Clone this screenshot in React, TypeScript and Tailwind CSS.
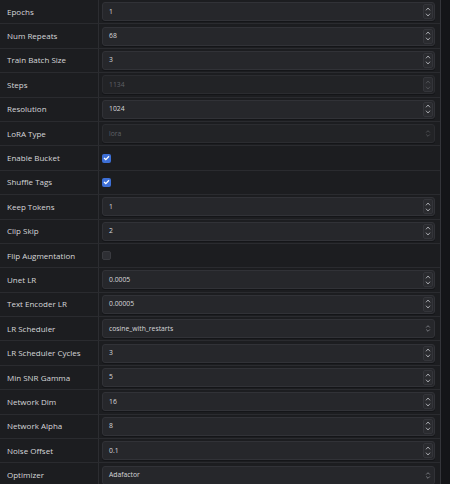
// 训练参数表格
type Field =
  | { label: string; kind: 'number'; value: string; disabled?: boolean }
  | { label: string; kind: 'select'; value: string; disabled?: boolean }
  | { label: string; kind: 'check'; checked: boolean };

const fields: Field[] = [
  { label: 'Epochs', kind: 'number', value: '1' },
  { label: 'Num Repeats', kind: 'number', value: '68' },
  { label: 'Train Batch Size', kind: 'number', value: '3' },
  { label: 'Steps', kind: 'number', value: '1134', disabled: true },
  { label: 'Resolution', kind: 'number', value: '1024' },
  { label: 'LoRA Type', kind: 'select', value: 'lora', disabled: true },
  { label: 'Enable Bucket', kind: 'check', checked: true },
  { label: 'Shuffle Tags', kind: 'check', checked: true },
  { label: 'Keep Tokens', kind: 'number', value: '1' },
  { label: 'Clip Skip', kind: 'number', value: '2' },
  { label: 'Flip Augmentation', kind: 'check', checked: false },
  { label: 'Unet LR', kind: 'number', value: '0.0005' },
  { label: 'Text Encoder LR', kind: 'number', value: '0.00005' },
  { label: 'LR Scheduler', kind: 'select', value: 'cosine_with_restarts' },
  { label: 'LR Scheduler Cycles', kind: 'number', value: '3' },
  { label: 'Min SNR Gamma', kind: 'number', value: '5' },
  { label: 'Network Dim', kind: 'number', value: '16' },
  { label: 'Network Alpha', kind: 'number', value: '8' },
  { label: 'Noise Offset', kind: 'number', value: '0.1' },
  { label: 'Optimizer', kind: 'select', value: 'Adafactor' },
];

function Chevron({ up, dim }: { up?: boolean; dim?: boolean }) {
  return (
    <svg width="6" height="4" viewBox="0 0 6 4" className={dim ? 'opacity-30' : ''}>
      <path
        d={up ? 'M1 3.3 L3 1 L5 3.3' : 'M1 0.7 L3 3 L5 0.7'}
        fill="none"
        stroke="#a4a6ab"
        strokeWidth="1"
      />
    </svg>
  );
}

function Spinner({ disabled }: { disabled?: boolean }) {
  return (
    <div className="w-[10px] h-[15px] mr-[1px] flex flex-col items-center justify-center gap-[2px] border border-[#34353a] bg-[#2a2b2f] rounded-[2px]">
      <Chevron up dim={disabled} />
      <Chevron dim={disabled} />
    </div>
  );
}

function SelectArrows({ disabled }: { disabled?: boolean }) {
  return (
    <svg width="6" height="9" viewBox="0 0 6 9" className={disabled ? 'opacity-40' : 'opacity-80'}>
      <path d="M1.2 3.5 L3 1.7 L4.8 3.5 M1.2 5.5 L3 7.3 L4.8 5.5" fill="none" stroke="#8d8f95" strokeWidth="1" />
    </svg>
  );
}

function FieldInput({ field }: { field: Field }) {
  if (field.kind === 'check') {
    return field.checked ? (
      <div className="w-[9px] h-[9px] rounded-[2px] bg-[#3d6fd6] flex items-center justify-center">
        <svg width="7" height="6" viewBox="0 0 7 6">
          <path d="M1 3 L2.8 4.6 L6 1.3" fill="none" stroke="#ffffff" strokeWidth="1.3" />
        </svg>
      </div>
    ) : (
      <div className="w-[9px] h-[9px] rounded-[2px] bg-[#2e2f34] border border-[#3a3b40]" />
    );
  }

  const disabled = field.disabled;
  return (
    <div
      className={`w-full h-[19px] flex items-center rounded-[3px] border shadow-[0_1px_0_#141518] ${
        disabled ? 'bg-[#222326] border-[#2b2c30]' : 'bg-[#26272b] border-[#313237]'
      }`}
    >
      <span className={`flex-1 pl-[6px] text-[6.8px] font-medium ${disabled ? 'text-[#5f6166]' : 'text-[#d8d9dc]'}`}>
        {field.value}
      </span>
      {field.kind === 'number' ? (
        <Spinner disabled={disabled} />
      ) : (
        <div className="w-[12px] flex items-center justify-center">
          <SelectArrows disabled={disabled} />
        </div>
      )}
    </div>
  );
}

export default function App() {
  return (
    <div
      className="w-[450px] h-[484px] flex overflow-hidden bg-[#1c1d20]"
      style={{ fontFamily: '"Open Sans", "Noto Sans", sans-serif' }}
    >
      <div className="w-[441px] border-r border-[#34353a]">
        {fields.map(f => (
          <div key={f.label} className="h-[24.4px] flex border-b border-[#2a2b2f]">
            <div className="w-[99px] shrink-0 flex items-center pl-[7px] border-r border-[#2c2d31] text-[8px] font-medium text-[#d6d7da]">
              {f.label}
            </div>
            <div className="flex-1 flex items-center pl-[3px] pr-[5px]">
              <FieldInput field={f} />
            </div>
          </div>
        ))}
      </div>
      <div className="flex-1 bg-[#141518]" />
    </div>
  );
}
